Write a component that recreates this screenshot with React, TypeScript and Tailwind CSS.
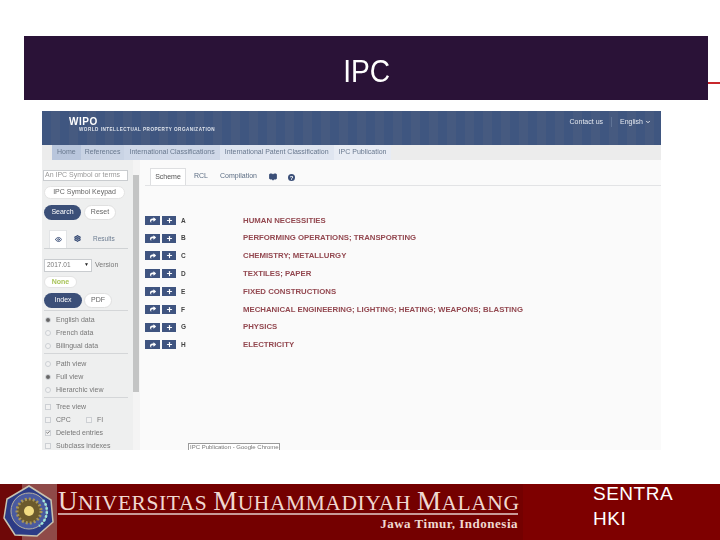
import { BookOpen, Settings, Eye, Plus, ChevronDown, Check } from 'lucide-react';
import { FaShare } from 'react-icons/fa';

const sections = [
  { letter: 'A', title: 'HUMAN NECESSITIES' },
  { letter: 'B', title: 'PERFORMING OPERATIONS; TRANSPORTING' },
  { letter: 'C', title: 'CHEMISTRY; METALLURGY' },
  { letter: 'D', title: 'TEXTILES; PAPER' },
  { letter: 'E', title: 'FIXED CONSTRUCTIONS' },
  { letter: 'F', title: 'MECHANICAL ENGINEERING; LIGHTING; HEATING; WEAPONS; BLASTING' },
  { letter: 'G', title: 'PHYSICS' },
  { letter: 'H', title: 'ELECTRICITY' },
];

function Option({ label, kind, on }: { label: string; kind: 'radio' | 'check'; on?: boolean }) {
  return (
    <div className="flex h-[13px] items-center gap-[5px] pl-[1px] text-[7px] leading-[13px] text-[#777]">
      <span
        className={`flex h-[6px] w-[6px] items-center justify-center border border-[#cdd0d4] bg-[#f2f2f2] ${kind === 'radio' ? 'rounded-full' : ''}`}
      >
        {on && kind === 'radio' && <span className="h-[4px] w-[4px] rounded-full bg-[#666]" />}
        {on && kind === 'check' && <Check size={7} strokeWidth={4} className="text-[#333]" />}
      </span>
      {label}
    </div>
  );
}

function Logo() {
  return (
    <svg width="57" height="56" viewBox="0 0 57 56" className="shrink-0">
      <rect width="57" height="56" fill="#8f4a48" />
      <rect width="22" height="56" fill="#6e0808" />
      <path d="M29 2 L51 16 L53 38 L37 52 L15 51 L4 34 L7 15 Z" fill="#2c3b86" stroke="#c9c3b0" strokeWidth="1.5" />
      <circle cx="29" cy="27" r="18" fill="#4a5aa0" stroke="#b5b0a0" strokeWidth="1" />
      <circle cx="29" cy="27" r="12" fill="#6c5a2c" />
      <circle cx="29" cy="27" r="12" fill="none" stroke="#a8965a" strokeWidth="3" strokeDasharray="2 2" />
      <path d="M43 16 A18 18 0 0 1 39 42" fill="none" stroke="#9fe8dc" strokeWidth="2.5" strokeDasharray="2.5 1.5" />
      <circle cx="29" cy="27" r="5" fill="#f2dc82" />
    </svg>
  );
}

export default function App() {
  return (
    <main className="relative flex h-[540px] w-[720px] flex-col overflow-hidden bg-white font-['Liberation_Sans',Arial,sans-serif]">
      {/* Title */}
      <header className="ml-[24px] mt-[36px] flex h-[64px] w-[684px] items-center justify-center bg-[#2a1237]">
        <h1 className="ml-[2px] mt-[5px] scale-x-[0.88] text-[32px] leading-none text-white">IPC</h1>
      </header>
      <div className="absolute left-[708px] top-[82px] h-[2px] w-[12px] bg-[#c8282c]" />

      {/* WIPO screenshot */}
      <section className="ml-[42px] mt-[11px] flex h-[339px] w-[619px] flex-col overflow-hidden bg-[#fafafa] blur-[0.4px]">
        <div className="flex h-[34px] justify-between bg-[repeating-linear-gradient(90deg,#3f5680_0px,#3f5680_9px,#465a80_9px,#465a80_18px)] pl-[27px] pr-[10px] pt-[6px] text-white">
          <div>
            <div className="text-[10px] font-bold leading-[10px] tracking-[0.5px]">WIPO</div>
            <div className="ml-[10px] text-[4.6px] font-bold leading-[6px] tracking-[0.5px] text-[#dfe4ec]">
              WORLD INTELLECTUAL PROPERTY ORGANIZATION
            </div>
          </div>
          <div className="flex items-start text-[7px] leading-[9px] text-[#e3e7ee]">
            <span>Contact us</span>
            <span className="mx-[8px] h-[10px] w-px bg-[#5f7396]" />
            <span className="flex items-center gap-[2px]">
              English <ChevronDown size={6} strokeWidth={4} />
            </span>
          </div>
        </div>

        <nav className="flex h-[15px] items-center bg-[#ececec] pl-[10px] text-[7px] text-[#68788e]">
          <span className="flex h-full items-center bg-[#b9c6dc] px-[5px]">Home</span>
          <span className="flex h-full items-center bg-[#c9d3e4] px-[4px]">References</span>
          <span className="flex h-full items-center bg-[#cfd8e8] px-[5px]">International Classifications</span>
          <span className="flex h-full items-center bg-[#dfe5f0] px-[5px]">International Patent Classification</span>
          <span className="flex h-full items-center bg-[#e8ecf4] px-[5px]">IPC Publication</span>
        </nav>

        <div className="flex min-h-0 flex-1">
          {/* Sidebar */}
          <aside className="flex w-[91px] shrink-0 flex-col bg-[#eeefef] pl-[2px] pr-[5px] pt-[10px]">
            <div className="-ml-[1px] flex h-[11px] w-[85px] items-center border border-[#c9cccf] bg-white pl-[1px] text-[7px] text-[#999]">
              An IPC Symbol or terms
            </div>
            <div className="mt-[5px] flex h-[14px] w-[81px] items-center justify-center rounded-full border border-[#e4e4e4] bg-white text-[7px] text-[#666]">
              IPC Symbol Keypad
            </div>
            <div className="mt-[6px] flex gap-[3px]">
              <span className="flex h-[15px] w-[37px] items-center justify-center rounded-full bg-[#3b4f78] text-[7px] text-white">Search</span>
              <span className="flex h-[15px] w-[32px] items-center justify-center rounded-full border border-[#e0e0e0] bg-white text-[7px] text-[#666]">Reset</span>
            </div>
            <div className="mt-[11px] flex h-[18px] items-end border-b border-[#cfd2d4] pl-[5px]">
              <span className="flex h-[18px] w-[18px] items-center justify-center border border-b-0 border-[#e2e4e6] bg-white">
                <Eye size={7} strokeWidth={3} className="text-[#3b4f78]" />
              </span>
              <span className="flex h-[18px] w-[20px] items-center justify-center">
                <Settings size={7} strokeWidth={4} className="text-[#3b4f78]" />
              </span>
              <span className="ml-[6px] flex h-[18px] items-center text-[6.5px] text-[#6d7d92]">Results</span>
            </div>
            <div className="mt-[10px] flex items-center gap-[3px] text-[7px] text-[#777]">
              <span className="flex h-[13px] w-[48px] items-center justify-between border border-[#c9cccf] bg-white px-[2px] text-[6.5px]">
                2017.01 <span className="text-[5px] text-[#222]">▼</span>
              </span>
              Version
            </div>
            <div className="mt-[4px] flex h-[13px] w-[33px] items-center justify-center rounded-full border border-[#e4e4e4] bg-white text-[7px] font-bold text-[#a9c45a]">
              None
            </div>
            <div className="mt-[5px] flex gap-[2px]">
              <span className="flex h-[15px] w-[38px] items-center justify-center rounded-full bg-[#3b4f78] text-[7px] text-white">Index</span>
              <span className="flex h-[15px] w-[28px] items-center justify-center rounded-full border border-[#e0e0e0] bg-white text-[7px] text-[#666]">PDF</span>
            </div>
            <div className="mt-[2px] border-t border-[#d4d6d8] pt-[2px]">
              <Option kind="radio" on label="English data" />
              <Option kind="radio" label="French data" />
              <Option kind="radio" label="Bilingual data" />
            </div>
            <div className="mt-[1px] border-t border-[#d4d6d8] pt-[3px]">
              <Option kind="radio" label="Path view" />
              <Option kind="radio" on label="Full view" />
              <Option kind="radio" label="Hierarchic view" />
            </div>
            <div className="mt-[1px] border-t border-[#d4d6d8] pt-[2px]">
              <Option kind="check" label="Tree view" />
              <div className="flex items-center">
                <div className="w-[41px]"><Option kind="check" label="CPC" /></div>
                <Option kind="check" label="FI" />
              </div>
              <Option kind="check" on label="Deleted entries" />
              <Option kind="check" label="Subclass indexes" />
            </div>
          </aside>

          {/* Scrollbar */}
          <div className="flex w-[7px] shrink-0 flex-col bg-[#f4f4f4]">
            <div className="mt-[15px] h-[217px] w-[6px] bg-[#c3c4c4]" />
          </div>

          {/* Scheme */}
          <div className="relative min-w-0 flex-1 pl-[5px] pt-[9px]">
            <div className="flex h-[17px] items-end border-b border-[#e2e3e5] pl-[5px] text-[7px] text-[#5d6e84]">
              <span className="flex h-[17px] w-[36px] items-center justify-center border border-b-0 border-[#dedfe1] bg-white text-[#555]">Scheme</span>
              <span className="flex h-[17px] items-center pl-[8px]">RCL</span>
              <span className="flex h-[17px] items-center pl-[12px]">Compilation</span>
              <BookOpen size={8} strokeWidth={3} fill="#3b4f78" className="mb-[4px] ml-[12px] text-[#3b4f78]" />
              <span className="mb-[4px] ml-[11px] flex h-[7px] w-[7px] items-center justify-center rounded-full bg-[#3b4f78] text-[6px] font-bold leading-none text-white">?</span>
            </div>
            <div className="mt-[25.5px] flex flex-col">
              {sections.map((s) => (
                <div key={s.letter} className="flex h-[17.8px] items-center">
                  <span className="flex h-[9px] w-[15px] items-center justify-center bg-[#3f5480] text-white">
                    <FaShare size={6} />
                  </span>
                  <span className="ml-[2px] flex h-[9px] w-[14px] items-center justify-center bg-[#3f5480] text-white">
                    <Plus size={7} strokeWidth={4} />
                  </span>
                  <span className="ml-[5px] w-[62px] text-[6.5px] font-bold text-[#444]">{s.letter}</span>
                  <span className="whitespace-nowrap text-[7.8px] font-bold text-[#934850]">{s.title}</span>
                </div>
              ))}
            </div>
            <div className="absolute left-[48px] top-[283px] h-[8px] w-[92px] border border-[#9a9a9a] bg-white pl-[1px] text-[6px] leading-[7px] text-[#777]">
              IPC Publication - Google Chrome
            </div>
          </div>
        </div>
      </section>

      {/* Footer */}
      <footer className="mt-auto flex h-[56px] bg-[#7e0000]">
        <Logo />
        <div className="w-[466px] bg-[#740000] pl-[1px] pr-[5px] font-['Liberation_Serif',serif] text-[#f0d8d0]">
          <div className="mt-[5px] h-[26px] whitespace-nowrap border-b-2 border-[#c89a98] text-[21.5px] leading-[25px] tracking-[0.55px]">
            <span className="text-[27px]">U</span>NIVERSITAS <span className="text-[27px]">M</span>UHAMMADIYAH <span className="text-[27px]">M</span>ALANG
          </div>
          <div className="mt-[1px] text-right text-[13px] font-bold leading-[15px] tracking-[0.5px]">Jawa Timur, Indonesia</div>
        </div>
        <div className="-mt-[3px] pl-[70px] text-[19px] leading-[25px] tracking-[0.5px] text-white">
          <div>SENTRA</div>
          <div>HKI</div>
        </div>
      </footer>
    </main>
  );
}
